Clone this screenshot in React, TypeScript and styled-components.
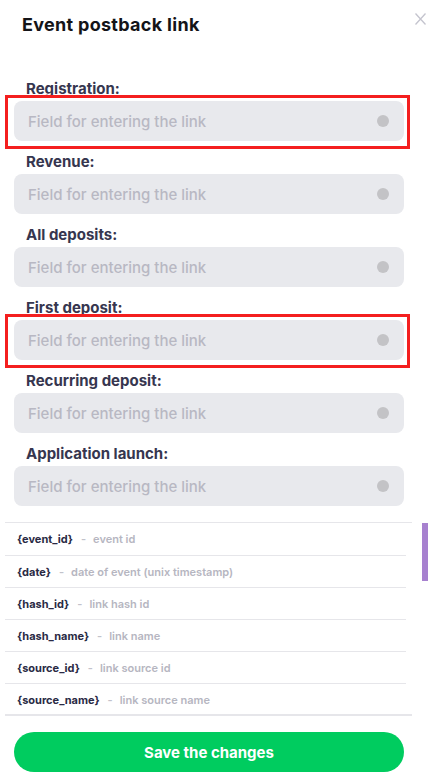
import React from "react";
import styled, { createGlobalStyle } from "styled-components";

const GlobalStyle = createGlobalStyle`
  * { box-sizing: border-box; }
  html, body { margin: 0; padding: 0; background: #ffffff; }
  body { font-family: Inter, "Noto Sans", Arial, sans-serif; -webkit-font-smoothing: antialiased; }
`;

const Modal = styled.div`
  width: 435px;
  height: 778px;
  background: #ffffff;
  display: flex;
  flex-direction: column;
  overflow: hidden;
`;

const Header = styled.div`
  display: flex;
  justify-content: space-between;
  align-items: flex-start;
  padding: 14px 9px 0 22px;
  height: 80px;
`;

const Title = styled.h1`
  margin: 0;
  font-size: 18px;
  line-height: 22px;
  font-weight: 700;
  letter-spacing: 0.3px;
  color: #141418;
`;

const CloseButton = styled.button`
  width: 11px;
  height: 12px;
  margin-top: -1px;
  padding: 0;
  border: none;
  background: none;
  display: flex;
  cursor: pointer;
`;

const Form = styled.div`
  display: flex;
  flex-direction: column;
  gap: 12px;
  padding: 0 31px 0 14px;
`;

const Field = styled.div`
  display: flex;
  flex-direction: column;
  gap: 3px;
`;

const Label = styled.label`
  padding-left: 12px;
  font-size: 15px;
  line-height: 18px;
  font-weight: 700;
  color: #36364f;
`;

const InputWrap = styled.div<{ $highlight?: boolean }>`
  position: relative;
  height: 40px;
  border-radius: 8px;
  background: #e8e9ed;
  display: flex;
  align-items: center;
  padding: 0 15px 0 14px;
  &::after {
    content: "";
    display: ${(p) => (p.$highlight ? "block" : "none")};
    position: absolute;
    top: -6px;
    left: -9px;
    right: -6px;
    bottom: -8px;
    border: 3px solid #f41f1f;
    pointer-events: none;
  }
`;

const Input = styled.input`
  flex: 1;
  min-width: 0;
  border: none;
  background: transparent;
  outline: none;
  padding: 0;
  font-family: inherit;
  font-size: 15px;
  font-weight: 500;
  color: #36364f;
  &::placeholder { color: #b8b8c3; }
`;

const StatusDot = styled.span`
  width: 12px;
  height: 12px;
  border-radius: 50%;
  background: #c3c3c6;
  flex-shrink: 0;
`;

const ParamsSection = styled.div`
  display: flex;
  align-items: flex-start;
  gap: 10px;
  padding: 0 7px 0 5px;
  margin-top: 16px;
`;

const ParamList = styled.ul`
  flex: 1;
  margin: 0;
  padding: 0;
  list-style: none;
  height: 194px;
  overflow: hidden;
  border-top: 1px solid #e6e6ea;
  border-bottom: 2px solid #e6e6ea;
`;

const ParamRow = styled.li`
  height: 32px;
  margin-right: 6px;
  padding-left: 12px;
  display: flex;
  align-items: center;
  font-size: 11px;
  font-weight: 600;
  & + & { border-top: 1px solid #e6e6ea; }
`;

const ParamKey = styled.span`
  color: #2a2a44;
  font-weight: 700;
`;

const Dash = styled.span`
  color: #c2c2cb;
  margin: 0 7px 0 8px;
`;

const ParamDesc = styled.span`
  color: #b6b6c1;
`;

const ScrollTrack = styled.div`
  width: 6px;
  height: 194px;
  display: flex;
  flex-direction: column;
`;

const ScrollThumb = styled.div`
  width: 6px;
  height: 58px;
  margin-top: 1px;
  background: #a781cf;
`;

const Footer = styled.div`
  padding: 16px 31px 0 14px;
`;

const SaveButton = styled.button`
  width: 100%;
  height: 40px;
  border: none;
  border-radius: 20px;
  background: #00cc5f;
  color: #ffffff;
  font-family: inherit;
  font-size: 15px;
  font-weight: 700;
  cursor: pointer;
`;

const fields = [
  { label: "Registration:", highlight: true },
  { label: "Revenue:" },
  { label: "All deposits:" },
  { label: "First deposit:", highlight: true },
  { label: "Recurring deposit:" },
  { label: "Application launch:" },
];

const params = [
  ["{event_id}", "event id"],
  ["{date}", "date of event (unix timestamp)"],
  ["{hash_id}", "link hash id"],
  ["{hash_name}", "link name"],
  ["{source_id}", "link source id"],
  ["{source_name}", "link source name"],
];

export default function App() {
  return (
    <>
      <GlobalStyle />
      <Modal>
        <Header>
          <Title>Event postback link</Title>
          <CloseButton aria-label="Close">
            <svg width="11" height="12" viewBox="0 0 11 12" fill="none">
              <path d="M0.5 0.5L10.5 11.5M10.5 0.5L0.5 11.5" stroke="#c4c4ce" strokeWidth="1.3" />
            </svg>
          </CloseButton>
        </Header>
        <Form>
          {fields.map((f) => (
            <Field key={f.label}>
              <Label>{f.label}</Label>
              <InputWrap $highlight={f.highlight}>
                <Input placeholder="Field for entering the link" />
                <StatusDot />
              </InputWrap>
            </Field>
          ))}
        </Form>
        <ParamsSection>
          <ParamList>
            {params.map(([k, d]) => (
              <ParamRow key={k}>
                <ParamKey>{k}</ParamKey>
                <Dash>-</Dash>
                <ParamDesc>{d}</ParamDesc>
              </ParamRow>
            ))}
          </ParamList>
          <ScrollTrack>
            <ScrollThumb />
          </ScrollTrack>
        </ParamsSection>
        <Footer>
          <SaveButton>Save the changes</SaveButton>
        </Footer>
      </Modal>
    </>
  );
}
